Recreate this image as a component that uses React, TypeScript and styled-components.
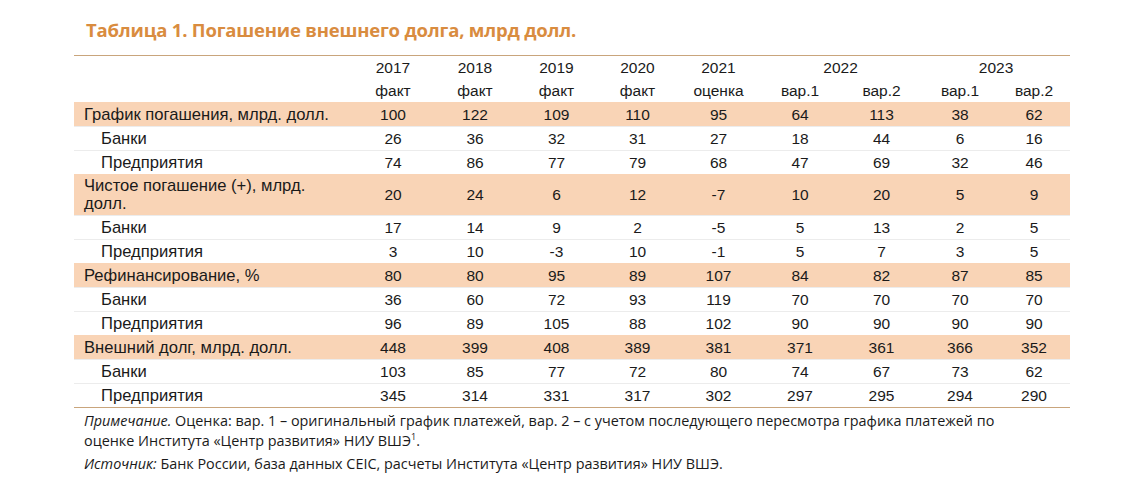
import React from "react";
import styled, { createGlobalStyle } from "styled-components";

const Global = createGlobalStyle`
  html, body { margin: 0; padding: 0; background: #ffffff; }
  body { width: 1130px; height: 488px; overflow: hidden; }
`;

const Page = styled.div`
  padding: 18px 0 0 74px;
  width: 996px;
`;

const Title = styled.h1`
  margin: 0 0 0 12px;
  height: 37px;
  font-family: "Open Sans", "Noto Sans", sans-serif;
  font-weight: 700;
  font-size: 18.5px;
  line-height: 24px;
  color: #d98c3f;
  letter-spacing: -0.2px;
`;

const Table = styled.table`
  border-collapse: collapse;
  table-layout: fixed;
  width: 996px;
  font-family: "Liberation Sans", Arial, sans-serif;
  font-size: 15.5px;
  color: #1a1a1a;
  border-top: 1px solid #c9a57c;
  border-bottom: 1px solid #c9a57c;
`;

const HeadCell = styled.th`
  font-weight: 400;
  text-align: center;
  height: 23px;
  padding: 0;
  line-height: 18px;
  vertical-align: middle;
`;

const Row = styled.tr<{ $hi?: boolean }>`
  background: ${(p) => (p.$hi ? "#f9d4b6" : "#ffffff")};
  border-top: 1px solid ${(p) => (p.$hi ? "#f9d4b6" : "#ececec")};
`;

const Label = styled.td<{ $sub?: boolean; $tall?: boolean }>`
  padding: 0 14px 0 ${(p) => (p.$sub ? "27px" : "10px")};
  height: ${(p) => (p.$tall ? "40px" : "23px")};
  font-size: 16.6px;
  line-height: 18px;
  vertical-align: middle;
`;

const Num = styled.td`
  text-align: center;
  padding: 0;
  vertical-align: middle;
`;

const Notes = styled.div`
  width: 940px;
  padding: 3px 0 0 10px;
  font-family: "Open Sans", "Noto Sans", sans-serif;
  font-size: 14.4px;
  line-height: 20px;
  color: #1a1a1a;
`;

const NoteLine = styled.p<{ $gap?: boolean }>`
  margin: ${(p) => (p.$gap ? "3px" : "0")} 0 0 0;
`;

const Sup = styled.sup`
  font-size: 9px;
  line-height: 0;
  vertical-align: 6px;
`;

const widths = [278, 82, 82, 81, 81, 81, 82, 81, 76, 72];

type R = { label: string; sub?: boolean; hi?: boolean; tall?: boolean; v: (string | number)[] };

const rows: R[] = [
  { label: "График погашения, млрд. долл.", hi: true, v: [100, 122, 109, 110, 95, 64, 113, 38, 62] },
  { label: "Банки", sub: true, v: [26, 36, 32, 31, 27, 18, 44, 6, 16] },
  { label: "Предприятия", sub: true, v: [74, 86, 77, 79, 68, 47, 69, 32, 46] },
  { label: "Чистое погашение (+), млрд. долл.", hi: true, tall: true, v: [20, 24, 6, 12, -7, 10, 20, 5, 9] },
  { label: "Банки", sub: true, v: [17, 14, 9, 2, -5, 5, 13, 2, 5] },
  { label: "Предприятия", sub: true, v: [3, 10, -3, 10, -1, 5, 7, 3, 5] },
  { label: "Рефинансирование, %", hi: true, v: [80, 80, 95, 89, 107, 84, 82, 87, 85] },
  { label: "Банки", sub: true, v: [36, 60, 72, 93, 119, 70, 70, 70, 70] },
  { label: "Предприятия", sub: true, v: [96, 89, 105, 88, 102, 90, 90, 90, 90] },
  { label: "Внешний долг, млрд. долл.", hi: true, v: [448, 399, 408, 389, 381, 371, 361, 366, 352] },
  { label: "Банки", sub: true, v: [103, 85, 77, 72, 80, 74, 67, 73, 62] },
  { label: "Предприятия", sub: true, v: [345, 314, 331, 317, 302, 297, 295, 294, 290] },
];

export default function App() {
  return (
    <>
      <Global />
      <Page>
        <Title>Таблица 1. Погашение внешнего долга, млрд долл.</Title>
        <Table>
          <colgroup>
            {widths.map((w, i) => (
              <col key={i} style={{ width: w }} />
            ))}
          </colgroup>
          <thead>
            <tr>
              <HeadCell />
              <HeadCell>2017</HeadCell>
              <HeadCell>2018</HeadCell>
              <HeadCell>2019</HeadCell>
              <HeadCell>2020</HeadCell>
              <HeadCell>2021</HeadCell>
              <HeadCell colSpan={2}>2022</HeadCell>
              <HeadCell colSpan={2}>2023</HeadCell>
            </tr>
            <tr>
              <HeadCell />
              <HeadCell>факт</HeadCell>
              <HeadCell>факт</HeadCell>
              <HeadCell>факт</HeadCell>
              <HeadCell>факт</HeadCell>
              <HeadCell>оценка</HeadCell>
              <HeadCell>вар.1</HeadCell>
              <HeadCell>вар.2</HeadCell>
              <HeadCell>вар.1</HeadCell>
              <HeadCell>вар.2</HeadCell>
            </tr>
          </thead>
          <tbody>
            {rows.map((r, i) => (
              <Row key={i} $hi={r.hi}>
                <Label $sub={r.sub} $tall={r.tall}>
                  {r.label}
                </Label>
                {r.v.map((x, j) => (
                  <Num key={j}>{x}</Num>
                ))}
              </Row>
            ))}
          </tbody>
        </Table>
        <Notes>
          <NoteLine>
            <i>Примечание.</i> Оценка: вар. 1 – оригинальный график платежей, вар. 2 – с учетом последующего
            пересмотра графика платежей по оценке Института «Центр развития» НИУ ВШЭ<Sup>1</Sup>.
          </NoteLine>
          <NoteLine $gap>
            <i>Источник:</i> Банк России, база данных CEIC, расчеты Института «Центр развития» НИУ ВШЭ.
          </NoteLine>
        </Notes>
      </Page>
    </>
  );
}
